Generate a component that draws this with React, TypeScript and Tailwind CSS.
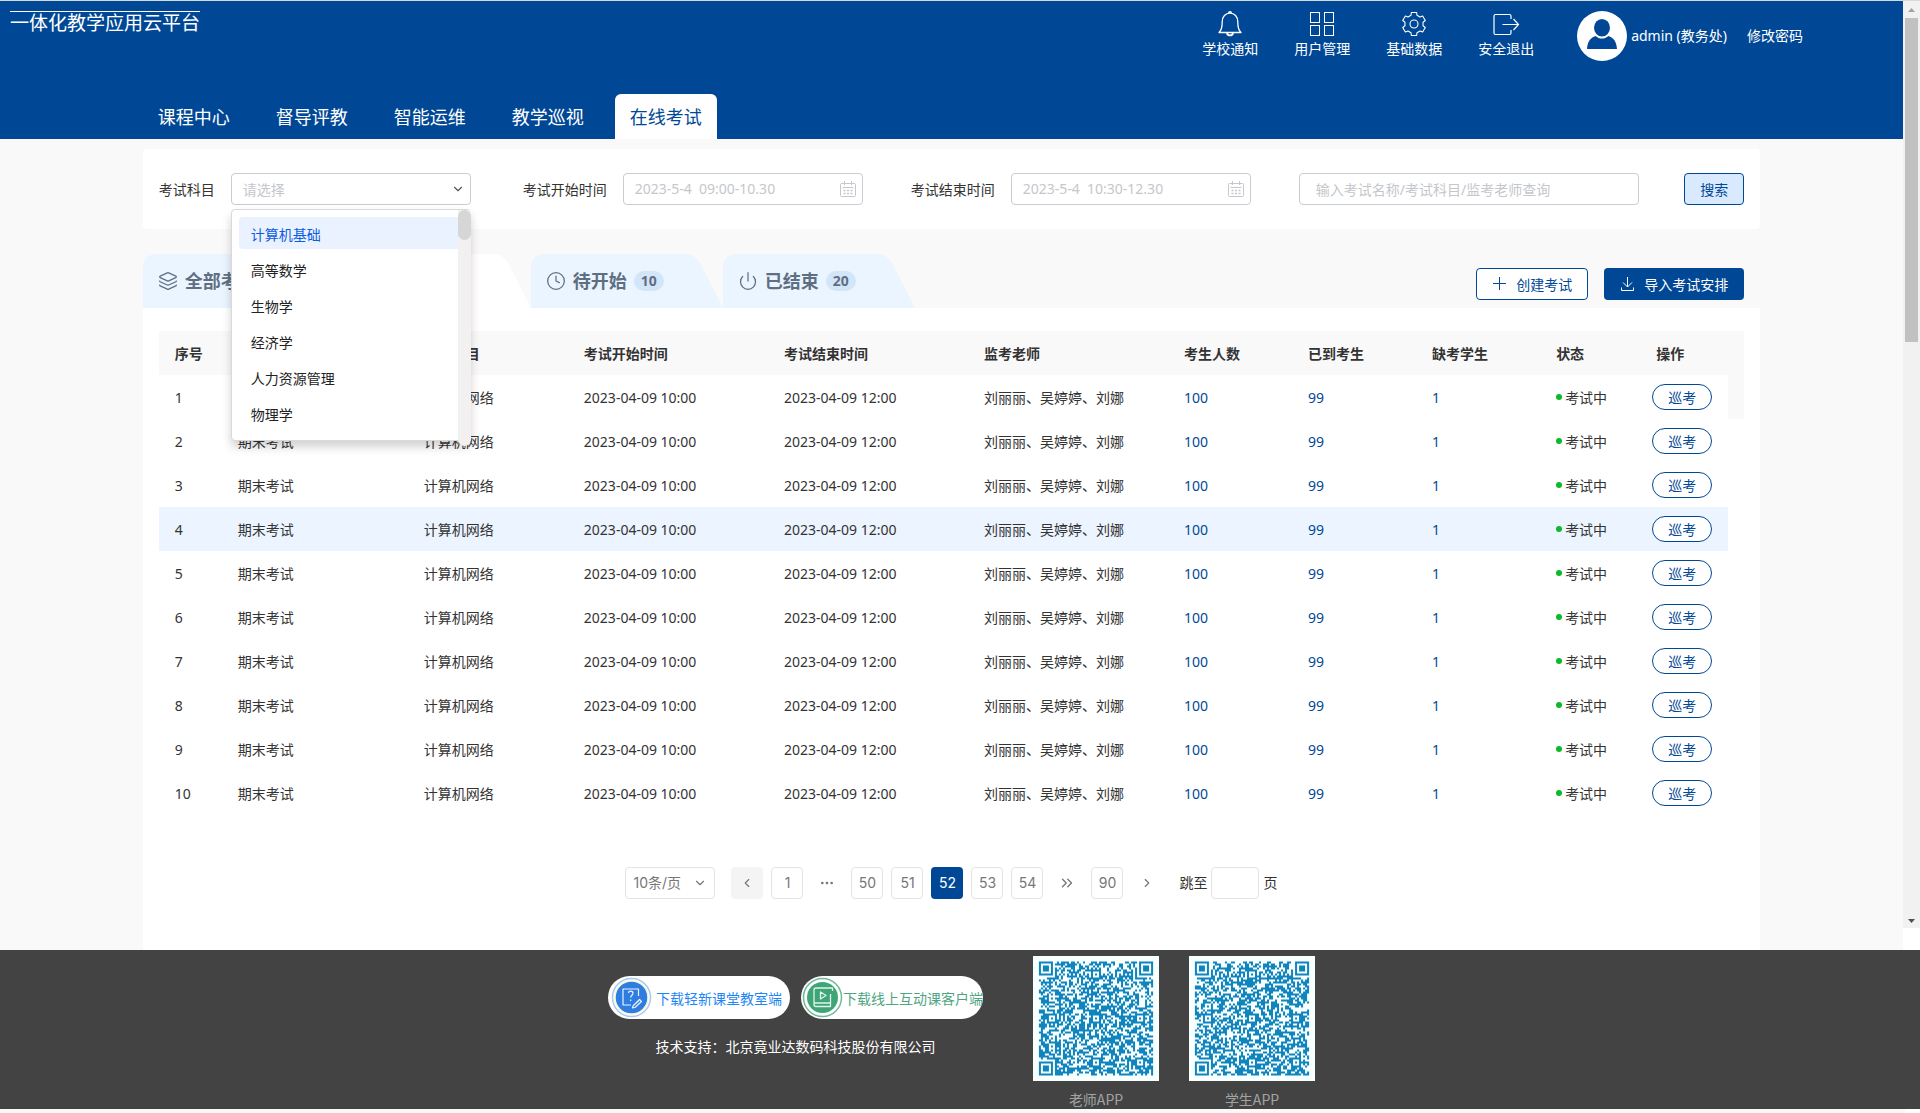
import type { ReactNode } from 'react'
import {
  ChevronDown,
  ChevronLeft,
  ChevronRight,
  ChevronsRight,
  Clock,
  Ellipsis,
  Layers,
  Power,
} from 'lucide-react'

const navItems = ['课程中心', '督导评教', '智能运维', '教学巡视', '在线考试']

const subjects = ['计算机基础', '高等数学', '生物学', '经济学', '人力资源管理', '物理学']

const columns = [
  { title: '序号', width: 'w-[63px]' },
  { title: '考试名称', width: 'w-[186px]' },
  { title: '考试科目', width: 'w-[160px]' },
  { title: '考试开始时间', width: 'w-[200px]' },
  { title: '考试结束时间', width: 'w-[200px]' },
  { title: '监考老师', width: 'w-[200px]' },
  { title: '考生人数', width: 'w-[124px]' },
  { title: '已到考生', width: 'w-[124px]' },
  { title: '缺考学生', width: 'w-[124px]' },
  { title: '状态', width: 'w-[100px]' },
  { title: '操作', width: 'w-[88px]' },
]

const exams = Array.from({ length: 10 }, (_, i) => ({
  id: i + 1,
  name: '期末考试',
  subject: '计算机网络',
  start: '2023-04-09 10:00',
  end: '2023-04-09 12:00',
  teachers: '刘丽丽、吴婷婷、刘娜',
  total: 100,
  arrived: 99,
  absent: 1,
  status: '考试中',
}))

function BellIcon() {
  return (
    <svg width="26" height="28" viewBox="0 0 26 28" fill="none" stroke="currentColor" strokeWidth="1.3">
      <path d="M2 22.5 C5 20 5.2 17 5.2 12 C5.2 6.5 8.5 3.2 13 3.2 C17.5 3.2 20.8 6.5 20.8 12 C20.8 17 21 20 24 22.5 Z" strokeLinejoin="round" />
      <path d="M10 23 C10.5 26.2 15.5 26.2 16 23" strokeWidth="1.8" />
      <path d="M11.8 3 C11.8 1.4 14.2 1.4 14.2 3" strokeWidth="1.6" />
    </svg>
  )
}

function GridIcon() {
  return (
    <svg width="26" height="28" viewBox="0 0 26 28" fill="none" stroke="currentColor">
      <rect x="1.5" y="2.5" width="9" height="10" />
      <rect x="15.5" y="2.5" width="9" height="10" />
      <rect x="1.5" y="15.5" width="9" height="10" />
      <rect x="15.5" y="15.5" width="9" height="10" />
    </svg>
  )
}

// six teeth, each one described by four polar points
function gearPath() {
  const points: string[] = []
  for (let i = 0; i < 6; i++) {
    const mid = i * 60 - 90
    const tooth = [
      [-19, 9.2],
      [-13, 11.8],
      [13, 11.8],
      [19, 9.2],
    ]
    for (const [offset, radius] of tooth) {
      const angle = ((mid + offset) * Math.PI) / 180
      points.push(`${(13 + radius * Math.cos(angle)).toFixed(2)} ${(14 + radius * Math.sin(angle)).toFixed(2)}`)
    }
  }
  return `M${points.join(' L')} Z`
}

function GearIcon() {
  return (
    <svg width="26" height="28" viewBox="0 0 26 28" fill="none" stroke="currentColor" strokeWidth="1.1" strokeLinejoin="round">
      <path d={gearPath()} />
      <circle cx="13" cy="14" r="4" />
    </svg>
  )
}

function ExitIcon() {
  return (
    <svg width="28" height="28" viewBox="0 0 28 28" fill="none" stroke="currentColor" strokeWidth="1.2">
      <path d="M19 9 V6 Q19 4.5 17.5 4.5 H3.5 Q2 4.5 2 6 V23 Q2 24.5 3.5 24.5 H17.5 Q19 24.5 19 23 V20" />
      <path d="M10.5 14.5 H26.5 M21.500 9 L26.5 14.5 L21.500 20" />
    </svg>
  )
}

const quickLinks = [
  { label: '学校通知', icon: <BellIcon /> },
  { label: '用户管理', icon: <GridIcon /> },
  { label: '基础数据', icon: <GearIcon /> },
  { label: '安全退出', icon: <ExitIcon /> },
]

function Header() {
  return (
    <header className="flex h-[139px] flex-col justify-between border-t border-[#d3d9dc] bg-[#004896] text-white">
      <div className="flex items-start justify-between pr-[100px]">
        <h1 className="mt-[10px] ml-[10px] border-t border-white text-[19px] leading-[22px]">
          一体化教学应用云平台
        </h1>
        <div className="flex pt-[9px]">
          <nav className="flex gap-9 text-sm leading-[22px]">
            {quickLinks.map((link) => (
              <a key={link.label} href="#" className="flex flex-col items-center">
                {link.icon}
                {link.label}
              </a>
            ))}
          </nav>
          <div className="mt-px ml-[43px] flex h-[50px] items-center text-sm">
            <svg width="50" height="50" viewBox="0 0 50 50">
              <circle cx="25" cy="25" r="25" fill="#fff" />
              <g fill="#004896">
                <ellipse cx="25" cy="16.8" rx="8" ry="8.8" />
                <path d="M10 38 C10.5 30 14 26.5 18.5 25 C22.5 28.4 27.5 28.4 31.5 25 C36 26.5 39.5 30 40 38 Z" />
              </g>
            </svg>
            <span className="ml-1">admin (教务处)</span>
            <a href="#" className="ml-5">
              修改密码
            </a>
          </div>
        </div>
      </div>
      <nav className="mx-auto flex w-[85%] gap-4 text-lg leading-[44px]">
        {navItems.map((item) => (
          <a
            key={item}
            href="#"
            className={
              item === '在线考试'
                ? 'rounded-t-md bg-white px-[15px] pt-px text-[#004896]'
                : 'px-[15px] pt-px'
            }
          >
            {item}
          </a>
        ))}
      </nav>
    </header>
  )
}

function CalendarIcon() {
  return (
    <svg width="16" height="16" viewBox="0 0 16 16" fill="none" stroke="#c4c7cc">
      <rect x="0.5" y="2.5" width="15" height="13" rx="1" />
      <path d="M4.5 0 V4 M11.5 0 V4 M2.5 6.5 H13.5" />
      <path d="M3.5 9.5 H5.5 M7 9.5 H9 M10.5 9.5 H12.5 M3.5 12.5 H5.5 M7 12.5 H9 M10.5 12.5 H12.5" strokeWidth="1.4" />
    </svg>
  )
}

function DateField({ id, label, placeholder }: { id: string; label: string; placeholder: string }) {
  return (
    <div className="flex items-center gap-4">
      <label htmlFor={id} className="pt-0.5">
        {label}
      </label>
      <div className="flex h-8 w-60 items-center rounded-sm border border-[#c9ccd1] pr-[6px] pl-[11px]">
        <input
          id={id}
          type="text"
          placeholder={placeholder}
          className="min-w-0 flex-1 outline-none placeholder:text-[#c4c7cc]"
        />
        <CalendarIcon />
      </div>
    </div>
  )
}

function SubjectMenu() {
  return (
    <div className="absolute top-9 left-0 z-10 flex h-[232px] w-60 rounded-sm border border-[#d9d9d9] bg-white shadow-[0_6px_10px_rgba(0,0,0,0.18)]">
      <ul className="flex flex-1 flex-col gap-1 pt-[7px] pl-[7px]">
        {subjects.map((subject, i) => (
          <li key={subject}>
            <button
              type="button"
              className={
                i === 0
                  ? 'h-8 w-full rounded-l-sm bg-[#eaf1ff] px-3 pt-1 text-left text-[#0d5ce0]'
                  : 'h-8 w-full px-3 pt-1 text-left text-[#222]'
              }
            >
              {subject}
            </button>
          </li>
        ))}
      </ul>
      <div className="-mr-px -mb-[6px] w-[13px] rounded-b-full bg-[#f3f0f0]">
        <div className="h-[30px] rounded-full bg-[#d6d6d6]" />
      </div>
    </div>
  )
}

function FilterBar() {
  return (
    <form className="flex h-20 items-center rounded bg-white px-4 text-sm text-[#333]">
      <div className="mr-1 flex items-center gap-4">
        <label htmlFor="subject" className="pt-0.5">
          考试科目
        </label>
        <div className="relative w-60">
          <select
            id="subject"
            className="h-8 w-full appearance-none rounded-sm border border-[#c9ccd1] bg-white px-[11px] pt-0.5 text-[#c4c7cc] outline-none"
          >
            <option>请选择</option>
          </select>
          <ChevronDown size={14} className="pointer-events-none absolute top-[9px] right-[6px] text-[#555]" />
          <SubjectMenu />
        </div>
      </div>
      <div className="ml-12">
        <DateField id="start" label="考试开始时间" placeholder="2023-5-4&nbsp; 09:00-10.30" />
      </div>
      <div className="ml-12">
        <DateField id="end" label="考试结束时间" placeholder="2023-5-4&nbsp; 10:30-12.30" />
      </div>
      <input
        type="search"
        aria-label="搜索考试"
        placeholder="输入考试名称/考试科目/监考老师查询"
        className="ml-12 h-8 w-[340px] rounded-sm border border-[#c9ccd1] px-4 outline-none placeholder:text-[#c4c7cc]"
      />
      <button
        type="button"
        className="ml-auto h-8 w-[60px] rounded-sm border border-[#004896] bg-[#d9eaff] pt-0.5 text-[#004896]"
      >
        搜索
      </button>
    </form>
  )
}

interface TabProps {
  icon?: ReactNode
  label: string
  count?: number
  active?: boolean
}

function StatusTab({ icon, label, count, active }: TabProps) {
  return (
    <button type="button" className="relative flex h-[54px] w-48 items-center pl-[15px] text-lg font-bold text-[#5f6f83]">
      <svg
        width="192"
        height="54"
        viewBox="0 0 192 54"
        className="absolute top-0 left-0"
        fill={active ? '#fff' : '#ebf5ff'}
      >
        <path d="M0 54 V14 Q0 0 14 0 H153 Q164 0 169 9 L192 54 Z" />
      </svg>
      <span className="relative flex items-center gap-[7px]">
        {icon}
        {label}
        {count !== undefined && (
          <span className="h-5 rounded-full bg-[#d3e5f9] px-[7px] text-sm leading-5">{count}</span>
        )}
      </span>
    </button>
  )
}

function StatusBar() {
  return (
    <div className="mt-[25px] flex items-end justify-between pr-4">
      <div className="flex">
        <div className="mr-1">
          <StatusTab icon={<Layers size={20} strokeWidth={1.5} />} label="全部考试" />
        </div>
        <StatusTab icon={<Clock size={20} strokeWidth={1.5} />} label="考试中" active />
        <StatusTab icon={<Clock size={20} strokeWidth={1.5} />} label="待开始" count={10} />
        <StatusTab icon={<Power size={20} strokeWidth={1.5} />} label="已结束" count={20} />
      </div>
      <div className="mb-2 flex gap-4 text-sm">
        <button
          type="button"
          className="flex h-8 items-center gap-2 rounded-sm border border-[#004896] bg-white px-[15px] text-[#004896]"
        >
          <svg width="16" height="16" viewBox="0 0 16 16" fill="none" stroke="currentColor">
            <path d="M1 7.5 H14 M7.5 1 V14" />
          </svg>
          <span className="pt-0.5">创建考试</span>
        </button>
        <button type="button" className="flex h-8 items-center gap-2 rounded-sm bg-[#004896] px-4 text-white">
          <svg width="16" height="16" viewBox="0 0 16 16" fill="none" stroke="currentColor">
            <path d="M7.5 1 V11 M3 6.5 L7.5 11 L12 6.5 M1.5 11.5 V14.5 H13.5 V11.5" />
          </svg>
          <span className="pt-0.5">导入考试安排</span>
        </button>
      </div>
    </div>
  )
}

function ExamTable() {
  return (
    <table className="w-full table-fixed text-left text-sm text-[#333]">
      <thead>
        <tr className="h-11 bg-[#f9f9f9]">
          {columns.map((col) => (
            <th key={col.title} scope="col" className={`${col.width} pt-0.5 pl-4 font-bold whitespace-nowrap`}>
              {col.title}
            </th>
          ))}
          <td className="w-4" />
        </tr>
      </thead>
      <tbody>
        {exams.map((exam) => (
          <tr
            key={exam.id}
            className={
              exam.id === 4
                ? 'h-11 whitespace-nowrap *:bg-[#ebf4ff] *:last:bg-white'
                : 'h-11 whitespace-nowrap'
            }
          >
            <td className="pt-0.5 pl-4">{exam.id}</td>
            <td className="pt-0.5 pl-4">{exam.name}</td>
            <td className="pt-0.5 pl-4">{exam.subject}</td>
            <td className="pt-0.5 pl-4">{exam.start}</td>
            <td className="pt-0.5 pl-4">{exam.end}</td>
            <td className="pt-0.5 pl-4">{exam.teachers}</td>
            <td className="pt-0.5 pl-4 text-[#004896]">{exam.total}</td>
            <td className="pt-0.5 pl-4 text-[#004896]">{exam.arrived}</td>
            <td className="pt-0.5 pl-4 text-[#004896]">{exam.absent}</td>
            <td className="pl-4">
              <span className="flex items-center gap-[3px]">
                <i className="size-[6px] rounded-full bg-[#0ab92c]" />
                <span className="pt-0.5">{exam.status}</span>
              </span>
            </td>
            <td className="pl-3">
              <button
                type="button"
                className="block h-[26px] w-[60px] rounded-full border border-[#004896] bg-white pt-0.5 text-[#004896]"
              >
                巡考
              </button>
            </td>
            <td className={exam.id === 1 ? 'bg-[#f9f9f9]' : ''} />
          </tr>
        ))}
      </tbody>
    </table>
  )
}

function Pagination() {
  const page = 'flex size-8 items-center justify-center rounded-sm'
  return (
    <nav className="mt-[52px] flex items-center justify-center gap-2 font-[Inter,'Noto_Sans_CJK_SC',sans-serif] text-sm text-[#777]">
      <div className="relative mr-2">
        <select
          aria-label="每页条数"
          className="h-8 w-[90px] appearance-none rounded-sm border border-[#e3e3e3] bg-white px-[7px] outline-none"
        >
          <option>10条/页</option>
        </select>
        <ChevronDown size={14} className="pointer-events-none absolute top-[9px] right-2" />
      </div>
      <button type="button" aria-label="上一页" className={`${page} bg-[#f4f4f4]`}>
        <ChevronLeft size={14} />
      </button>
      <button type="button" className={`${page} border border-[#e3e3e3]`}>
        1
      </button>
      <span className={page}>
        <Ellipsis size={16} />
      </span>
      {[50, 51, 52, 53, 54].map((n) => (
        <button
          key={n}
          type="button"
          className={n === 52 ? `${page} bg-[#004896] text-white` : `${page} border border-[#e3e3e3]`}
        >
          {n}
        </button>
      ))}
      <button type="button" aria-label="向后五页" className={page}>
        <ChevronsRight size={18} strokeWidth={1.8} />
      </button>
      <button type="button" className={`${page} border border-[#e3e3e3]`}>
        90
      </button>
      <button type="button" aria-label="下一页" className={page}>
        <ChevronRight size={14} />
      </button>
      <label className="ml-2 flex items-center gap-1 text-[#333]">
        跳至
        <input type="text" className="h-8 w-12 rounded-sm border border-[#e3e3e3] outline-none" />页
      </label>
    </nav>
  )
}

function ScrollBar() {
  return (
    <div className="mb-[22px] flex w-[17px] flex-col items-center border-t border-[#d3d9dc] bg-[#f1f1f1]">
      <svg width="17" height="17" viewBox="0 0 17 17" fill="#a3a3a3">
        <path d="M5 11 L8.5 7 L12 11 Z" />
      </svg>
      <div className="h-[324px] w-[13px] bg-[#c1c1c1]" />
      <svg width="17" height="17" viewBox="0 0 17 17" fill="#505050" className="mt-auto">
        <path d="M5 8 L8.5 12 L12 8 Z" />
      </svg>
    </div>
  )
}

const QR_SIZE = 57

// module pattern of a version 10 code: three finders, alignment marks, the rest filled from a seed
function qrPath(seed: number) {
  const marks = [6, 28, 50]
  const finders = [
    [3, 3],
    [QR_SIZE - 4, 3],
    [3, QR_SIZE - 4],
  ]
  let state = seed
  let d = ''
  for (let y = 0; y < QR_SIZE; y++) {
    for (let x = 0; x < QR_SIZE; x++) {
      state = (state * 1103515245 + 12345) % 2147483648
      let dark = state / 2147483648 < 0.54
      if (x === 6 || y === 6) dark = (x + y) % 2 === 0
      for (const mx of marks) {
        for (const my of marks) {
          const r = Math.max(Math.abs(x - mx), Math.abs(y - my))
          if (r <= 2) dark = r !== 1
        }
      }
      for (const [fx, fy] of finders) {
        const r = Math.max(Math.abs(x - fx), Math.abs(y - fy))
        if (r <= 4) dark = r === 3 || r <= 1
      }
      if (dark) d += `M${x} ${y}h1v1h-1z`
    }
  }
  return d
}

function QrCode({ seed, label }: { seed: number; label: string }) {
  return (
    <figure className="flex flex-col items-center">
      <svg width="126" height="126" viewBox="-2.7 -2.7 62.4 62.4" className="bg-[#f8ffff]">
        <path d={qrPath(seed)} fill="#1084bd" />
      </svg>
      <figcaption className="mt-2 text-sm leading-5 text-[#a3a3a3]">{label}</figcaption>
    </figure>
  )
}

function Footer() {
  return (
    <footer className="flex h-[159px] justify-center bg-[#434343] pl-[3px] font-['Noto_Sans_CJK_SC',sans-serif] text-sm">
      <div className="mt-[26px] mr-[50px]">
        <div className="flex gap-[11px]">
          <a href="#" className="flex h-[43px] w-[182px] items-center gap-1 rounded-full bg-white pl-[3px] whitespace-nowrap text-[#1f87f5]">
            <svg width="41" height="41" viewBox="0 0 41 41" fill="none" className="shrink-0">
              <circle cx="20.5" cy="20.5" r="19" fill="#fff" stroke="#a9c8f0" strokeWidth="1.5" />
              <circle cx="20.5" cy="20.5" r="16.5" fill="#2f7de0" stroke="#f1f8d8" strokeWidth="1.5" />
              <g stroke="#e8f3ff" strokeWidth="1.2" strokeLinejoin="round">
                <path d="M27.5 19 V12 H12 V28 H20" />
                <path d="M17.5 16 C17.5 13.5 22 13.5 22 16.3 C22 18.3 19.7 18.2 19.7 20.5 M19.7 22.5 V24" />
                <path d="M22 29 L28.5 22.5 L30.5 24.5 L24 30.5 L21.5 31 Z M24 27 L28 23.5" />
              </g>
            </svg>
            下载轻新课堂教室端
          </a>
          <a href="#" className="flex h-[43px] w-[182px] items-center rounded-full bg-white pl-px whitespace-nowrap text-[#4fa583]">
            <svg width="41" height="41" viewBox="0 0 41 41" fill="none" className="shrink-0">
              <circle cx="20.5" cy="20.5" r="19" fill="#fff" stroke="#6cba98" strokeWidth="1.5" />
              <circle cx="20.5" cy="20.5" r="15.5" fill="#3fa577" />
              <g stroke="#dff5ea" strokeWidth="1.3" strokeLinejoin="round">
                <path d="M28.5 17 V29.5 H14 Q12 29.5 12 27.5 V13 Q12 11 14 11 H30.5 V14 M12 26 H28.5" />
                <path d="M18.5 15 L24 18.5 L18.5 22 Z" />
              </g>
            </svg>
            下载线上互动课客户端
          </a>
        </div>
        <p className="mt-[17px] text-center leading-5 text-white">技术支持：北京竟业达数码科技股份有限公司</p>
      </div>
      <div className="mt-[6px] flex gap-[30px]">
        <QrCode seed={20230} label="老师APP" />
        <QrCode seed={91357} label="学生APP" />
      </div>
    </footer>
  )
}

export default function App() {
  return (
    <div className="flex min-h-screen flex-col bg-white font-['Noto_Sans','Noto_Sans_CJK_SC',sans-serif]">
      <div className="flex">
        <div className="min-w-0 flex-1 bg-[#f9f9f9]">
          <Header />
          <main className="mx-auto w-[85%] pt-[10px]">
            <FilterBar />
            <StatusBar />
            <section className="bg-white px-4 pt-[23px] pb-[51px]">
              <ExamTable />
              <Pagination />
            </section>
          </main>
        </div>
        <ScrollBar />
      </div>
      <Footer />
      <div className="mr-[15px] flex-1 bg-[#f9f9f9]" />
    </div>
  )
}
